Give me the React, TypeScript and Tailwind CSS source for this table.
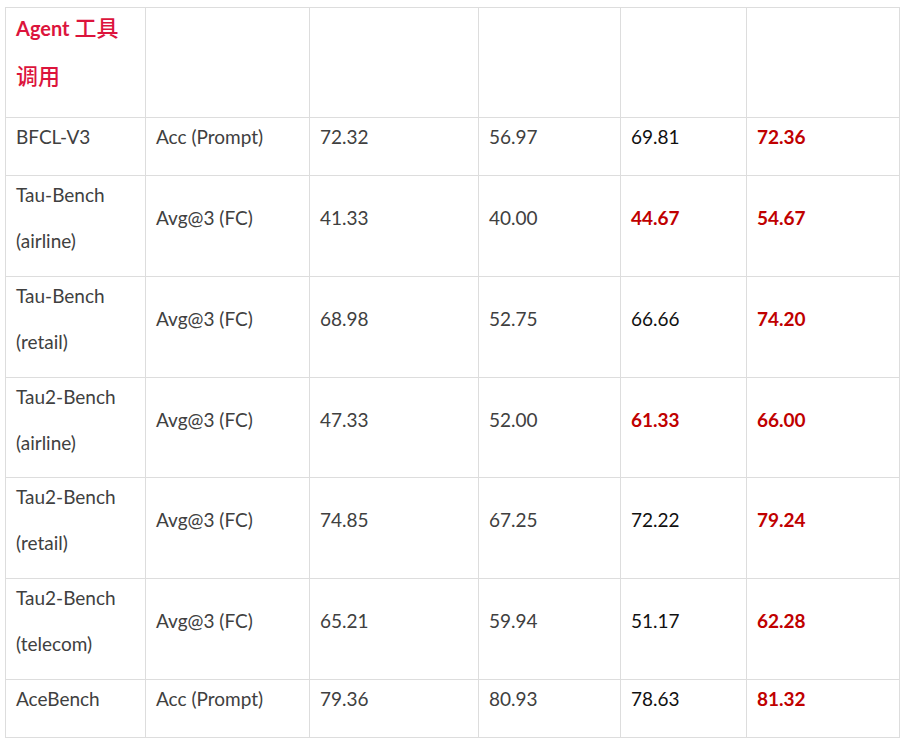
type Cell = { lines: string[]; tone?: "gray" | "black" | "red" };

type Row = { cells: Cell[]; tight?: boolean };

const rows: Row[] = [
  {
    cells: [
      { lines: ["BFCL-V3"] },
      { lines: ["Acc (Prompt)"] },
      { lines: ["72.32"] },
      { lines: ["56.97"] },
      { lines: ["69.81"], tone: "black" },
      { lines: ["72.36"], tone: "red" },
    ],
  },
  {
    cells: [
      { lines: ["Tau-Bench", "(airline)"] },
      { lines: ["Avg@3 (FC)"] },
      { lines: ["41.33"] },
      { lines: ["40.00"] },
      { lines: ["44.67"], tone: "red" },
      { lines: ["54.67"], tone: "red" },
    ],
  },
  {
    cells: [
      { lines: ["Tau-Bench", "(retail)"] },
      { lines: ["Avg@3 (FC)"] },
      { lines: ["68.98"] },
      { lines: ["52.75"] },
      { lines: ["66.66"], tone: "black" },
      { lines: ["74.20"], tone: "red" },
    ],
  },
  {
    tight: true,
    cells: [
      { lines: ["Tau2-Bench", "(airline)"] },
      { lines: ["Avg@3 (FC)"] },
      { lines: ["47.33"] },
      { lines: ["52.00"] },
      { lines: ["61.33"], tone: "red" },
      { lines: ["66.00"], tone: "red" },
    ],
  },
  {
    cells: [
      { lines: ["Tau2-Bench", "(retail)"] },
      { lines: ["Avg@3 (FC)"] },
      { lines: ["74.85"] },
      { lines: ["67.25"] },
      { lines: ["72.22"], tone: "black" },
      { lines: ["79.24"], tone: "red" },
    ],
  },
  {
    cells: [
      { lines: ["Tau2-Bench", "(telecom)"] },
      { lines: ["Avg@3 (FC)"] },
      { lines: ["65.21"] },
      { lines: ["59.94"] },
      { lines: ["51.17"], tone: "black" },
      { lines: ["62.28"], tone: "red" },
    ],
  },
  {
    cells: [
      { lines: ["AceBench"] },
      { lines: ["Acc (Prompt)"] },
      { lines: ["79.36"] },
      { lines: ["80.93"] },
      { lines: ["78.63"], tone: "black" },
      { lines: ["81.32"], tone: "red" },
    ],
  },
];

const widths = ["w-[140px]", "w-[164px]", "w-[169px]", "w-[142px]", "w-[126px]", "w-[153px]"];

function toneClass(tone?: Cell["tone"]) {
  if (tone === "red") return "font-bold text-[#c00000]";
  if (tone === "black") return "text-[#111111]";
  return "text-[#404040]";
}

function padClass(row: Row) {
  const double = row.cells.some((c) => c.lines.length > 1);
  if (!double) return "pb-[19px]";
  return row.tight ? "pb-[15px]" : "pb-[16px]";
}

export default function App() {
  return (
    <div className="min-h-screen bg-white pl-[5px] pt-[7px] font-['Lato','Noto_Sans_CJK_SC',sans-serif] text-[19px]">
      <table className="w-[894px] table-fixed border-collapse">
        <colgroup>
          {widths.map((w, i) => (
            <col key={i} className={w} />
          ))}
        </colgroup>
        <tbody>
          {/* section header */}
          <tr>
            <td className="border border-[#dddddd] px-[10px] pb-[24px] pt-0 align-top text-[#dc143c]">
              <div className="-mt-[1px] h-[38px] leading-[38px]">
                <span className="text-[20px] font-bold">Agent </span>
                <span className="font-['Noto_Sans_CJK_SC',sans-serif] text-[22px] font-medium">工具</span>
              </div>
              <div className="mt-[10px] h-[38px] font-['Noto_Sans_CJK_SC',sans-serif] text-[22px] font-medium leading-[38px]">
                调用
              </div>
            </td>
            {[0, 1, 2, 3, 4].map((i) => (
              <td key={i} className="border border-[#dddddd]" />
            ))}
          </tr>
          {rows.map((row, ri) => (
            <tr key={ri}>
              {row.cells.map((cell, ci) => (
                <td
                  key={ci}
                  className={`border border-[#dddddd] px-[10px] pt-0 align-middle ${padClass(row)} ${toneClass(
                    cell.tone
                  )}`}
                >
                  {cell.lines.map((line, li) => (
                    <div key={li} className={`leading-[38px] ${li > 0 ? "mt-[8px]" : ""}`}>
                      {line}
                    </div>
                  ))}
                </td>
              ))}
            </tr>
          ))}
        </tbody>
      </table>
    </div>
  );
}
